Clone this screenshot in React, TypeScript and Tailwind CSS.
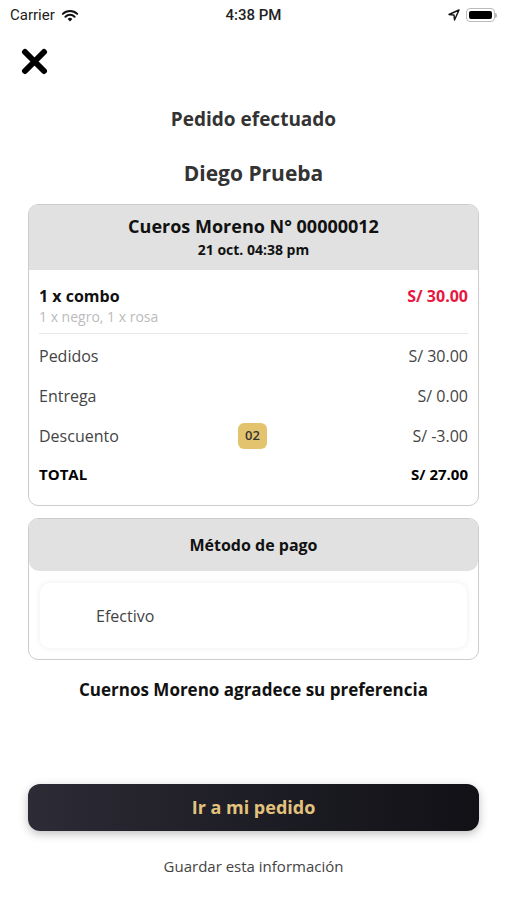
import React from "react";

const font = { fontFamily: "'Open Sans', 'Noto Sans', sans-serif" };

// barra de estado iOS
const StatusBar = () => (
  <div className="h-[30px] px-[10px] flex items-center justify-between text-[#222] relative" style={{ fontFamily: "Roboto, 'Liberation Sans', sans-serif" }}>
    <div className="flex items-center gap-[6px] text-[15px]">
      <span>Carrier</span>
      <svg width="18" height="13" viewBox="0 0 18 13">
        <path d="M9 12.5 L6.6 9.9 A3.4 3.4 0 0 1 11.4 9.9 Z" fill="#111" />
        <path d="M4.4 7.7 A6.5 6.5 0 0 1 13.6 7.7" stroke="#111" strokeWidth="2" fill="none" strokeLinecap="round" />
        <path d="M1.8 4.9 A10.2 10.2 0 0 1 16.2 4.9" stroke="#111" strokeWidth="2" fill="none" strokeLinecap="round" />
      </svg>
    </div>
    <div className="absolute left-1/2 -translate-x-1/2 text-[15px] font-medium">4:38 PM</div>
    <div className="flex items-center gap-[6px]">
      <svg width="12" height="12" viewBox="0 0 12 12">
        <path d="M11 1 L1 5.5 L6 6 L6.5 11 Z" fill="none" stroke="#111" strokeWidth="1.4" strokeLinejoin="round" />
      </svg>
      <div className="flex items-center">
        <div className="w-[29px] h-[14px] rounded-[4px] border border-[#bbb] p-[2px]">
          <div className="w-full h-full bg-black rounded-[2px]" />
        </div>
        <div className="w-[2px] h-[5px] bg-[#bbb] rounded-r-sm" />
      </div>
    </div>
  </div>
);

const Row = ({ label, value, bold, badge }: { label: string; value: string; bold?: boolean; badge?: string }) => (
  <div className={`h-[20px] flex items-center justify-between ${bold ? "text-black font-bold text-[15px]" : "text-[#444] text-[16px]"}`}>
    <span className="w-[120px]">{label}</span>
    {badge ? (
      <span className="h-[26px] flex items-center bg-[#e4c36f] text-[#333] text-[13px] font-semibold rounded-[6px] px-[7px] ml-[79px]">{badge}</span>
    ) : null}
    <span className="flex-1 text-right">{value}</span>
  </div>
);

export default function App() {
  return (
    <div className="w-[507px] h-[900px] bg-white overflow-hidden flex flex-col" style={font}>
      <StatusBar />

      {/* cerrar */}
      <div className="px-[21px] pt-[18px]">
        <svg width="27" height="27" viewBox="0 0 27 27" className="block">
          <path d="M4 4 L23 23 M23 4 L4 23" stroke="#000" strokeWidth="6" strokeLinecap="round" />
        </svg>
      </div>

      <h1 className="text-center text-[19px] leading-[24px] font-bold text-[#333] mt-[32px]">Pedido efectuado</h1>
      <h2 className="text-center text-[21px] leading-[28px] font-bold text-[#333] mt-[28px]">Diego Prueba</h2>

      {/* detalle del pedido */}
      <div className="mx-[28px] mt-[17px] border border-[#ccc] rounded-[10px] overflow-hidden">
        <div className="bg-[#e1e1e1] h-[65px] flex flex-col items-center justify-center gap-[3px]">
          <div className="text-[18px] leading-[22px] font-bold text-[#111]">Cueros Moreno N° 00000012</div>
          <div className="text-[14px] leading-[20px] font-bold text-[#111]">21 oct. 04:38 pm</div>
        </div>
        <div className="px-[10px] pt-[16px] pb-[21px]">
          <div className="flex justify-between">
            <div>
              <div className="text-[16px] font-bold text-[#111] leading-[20px]">1 x combo</div>
              <div className="text-[14px] text-[#bbb] leading-[20px] mt-[1px]">1 x negro, 1 x rosa</div>
            </div>
            <div className="text-[16px] font-bold text-[#e8173f] leading-[20px]">S/ 30.00</div>
          </div>
          <div className="h-px bg-[#e8e8e8] mt-[6px]" />
          <div className="flex flex-col gap-[20px] mt-[12px]">
            <Row label="Pedidos" value="S/ 30.00" />
            <Row label="Entrega" value="S/ 0.00" />
            <Row label="Descuento" value="S/ -3.00" badge="02" />
          </div>
          <div className="mt-[18px]">
            <Row label="TOTAL" value="S/ 27.00" bold />
          </div>
        </div>
      </div>

      {/* método de pago */}
      <div className="mx-[28px] mt-[12px] border border-[#ccc] rounded-[10px] overflow-hidden">
        <div className="bg-[#e1e1e1] h-[52px] flex items-center justify-center rounded-b-[10px]">
          <div className="text-[16px] font-bold text-[#111]">Método de pago</div>
        </div>
        <div className="px-[11px] pt-[12px] pb-[11px]">
          <div className="h-[65px] rounded-[10px] shadow-[0_0_6px_rgba(0,0,0,0.08)] flex items-center pl-[56px] text-[16px] text-[#444]">
            Efectivo
          </div>
        </div>
      </div>

      <p className="text-center text-[17px] leading-[22px] font-bold text-[#111] mt-[19px]">Cuernos Moreno agradece su preferencia</p>

      <div className="flex-1" />

      <button className="mx-[28px] h-[47px] rounded-[12px] bg-gradient-to-r from-[#2c2b36] to-[#111116] shadow-[0_3px_10px_rgba(0,0,0,0.25)] text-[#e3c27d] text-[18px] font-bold">
        Ir a mi pedido
      </button>
      <p className="text-center text-[15px] text-[#444] mt-[24px] mb-[23px]">Guardar esta información</p>
    </div>
  );
}
